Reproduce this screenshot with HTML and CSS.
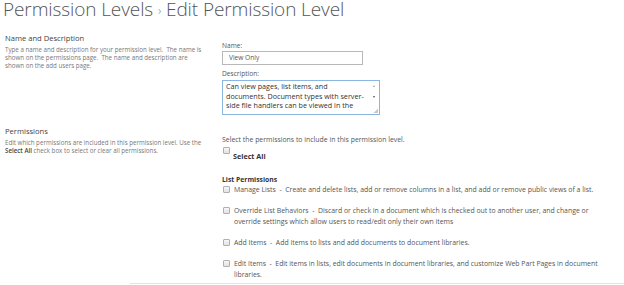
FILE: index.html
```html
<!DOCTYPE html>
<html lang="en">
<head>
<meta charset="utf-8">
<title>Edit Permission Level</title>
<link rel="stylesheet" href="styles.css">
</head>
<body>
<h1 class="title">Permission Levels <span class="sep">›</span> Edit Permission Level</h1>
<div class="section sec-name">
  <div class="left">
    <div class="sec-title">Name and Description</div>
    <div class="sec-desc">Type a name and description for your permission level.&nbsp; The name is shown on the permissions page.&nbsp; The name and description are shown on the add users page.</div>
  </div>
  <div class="right right-name">
    <div class="field-label">Name:</div>
    <div class="input">View Only</div>
    <div class="field-label desc-label">Description:</div>
    <div class="textarea">
      <div class="ta-text">Can view pages, list items, and documents. Document types with server-side file handlers can be viewed in the</div>
      <div class="ta-scroll">
        <span class="arr up"></span>
        <span class="arr down"></span>
        <span class="grip"></span>
      </div>
    </div>
  </div>
</div>
<div class="section sec-perm">
  <div class="left">
    <div class="sec-title">Permissions</div>
    <div class="sec-desc">Edit which permissions are included in this permission level. Use the <b>Select All</b> check box to select or clear all permissions.</div>
  </div>
  <div class="right right-perm">
    <div class="intro">Select the permissions to include in this permission level.</div>
    <div class="select-all">
      <span class="cb"></span>
      <div class="sa-label">Select All</div>
    </div>
    <div class="group-title">List Permissions</div>
    <div class="perm"><span class="cb"></span><div class="perm-text">Manage Lists&nbsp; -&nbsp; Create and delete lists, add or remove columns in a list, and add or remove public views of a list.</div></div>
    <div class="perm"><span class="cb"></span><div class="perm-text">Override List Behaviors&nbsp; -&nbsp; Discard or check in a document which is checked out to another user, and change or override settings which allow users to read/edit only their own items</div></div>
    <div class="perm"><span class="cb"></span><div class="perm-text">Add Items&nbsp; -&nbsp; Add items to lists and add documents to document libraries.</div></div>
    <div class="perm"><span class="cb"></span><div class="perm-text">Edit Items&nbsp; -&nbsp; Edit items in lists, edit documents in document libraries, and customize Web Part Pages in document libraries.</div></div>
  </div>
</div>
<div class="bottom-line"></div>
</body>
</html>
```
FILE: styles.css
```css
html, body {
  margin: 0;
  padding: 0;
  background: #ffffff;
  overflow: hidden;
}
body {
  font-family: "Open Sans", "Liberation Sans", sans-serif;
  color: #444444;
  width: 624px;
  height: 285px;
}
.title {
  margin: 0 0 0 3px;
  font-size: 19px;
  line-height: 19px;
  font-weight: 300;
  color: #555555;
  letter-spacing: -0.1px;
  white-space: nowrap;
}
.title .sep {
  font-size: 13px;
  color: #888;
  vertical-align: 1px;
}
.section {
  display: grid;
  grid-template-columns: 222px 1fr;
}
.sec-name {
  margin-top: 13px;
  height: 93px;
}
.left {
  padding-left: 5px;
}
.sec-title {
  font-size: 7.6px;
  line-height: 10px;
  color: #444;
}
.sec-desc {
  width: 201px;
  margin-top: 3px;
  font-size: 6.2px;
  line-height: 8px;
  color: #777;
}
.sec-desc b {
  color: #444;
  font-weight: 600;
}
.right-name {
  padding-top: 9px;
}
.field-label {
  font-size: 6.6px;
  line-height: 8px;
  color: #555;
}
.input {
  margin-top: 1px;
  width: 133px;
  height: 12px;
  border: 1px solid #b8b8b8;
  padding-left: 6px;
  font-size: 6.6px;
  line-height: 12px;
  color: #555;
}
.desc-label {
  margin-top: 5px;
}
.textarea {
  margin-top: 2px;
  width: 156px;
  height: 33px;
  border: 1px solid #8bb6e0;
  display: flex;
}
.ta-text {
  flex: 1;
  padding: 1px 2px 0 3px;
  font-size: 7.2px;
  line-height: 9.6px;
  color: #333;
  overflow: hidden;
}
.ta-scroll {
  width: 9px;
  position: relative;
  background: #fff;
}
.arr {
  position: absolute;
  left: 3px;
  width: 0;
  height: 0;
  border-left: 1.5px solid transparent;
  border-right: 1.5px solid transparent;
}
.arr.up {
  top: 4px;
  border-bottom: 2px solid #a0a0a0;
}
.arr.down {
  top: 15px;
  border-top: 2px solid #505050;
}
.grip {
  position: absolute;
  right: 1px;
  bottom: 1px;
  width: 4px;
  height: 4px;
  background: linear-gradient(135deg, transparent 50%, #c8c8c8 50%);
}
.right-perm {
  padding-top: 10px;
}
.intro {
  font-size: 6.9px;
  line-height: 8px;
  color: #555;
}
.cb {
  display: block;
  width: 5px;
  height: 5px;
  border: 1px solid #b0b0b0;
  border-radius: 1px;
  background: linear-gradient(#f7f7f7, #e2e2e2);
}
.select-all .cb {
  margin: 3px 0 0 1px;
}
.sa-label {
  margin-left: 11px;
  margin-top: -2px;
  font-size: 7.2px;
  line-height: 9px;
  font-weight: 700;
  color: #333;
}
.group-title {
  margin-top: 14px;
  font-size: 6.8px;
  line-height: 9px;
  font-weight: 700;
  color: #333;
}
.perm {
  display: flex;
  align-items: flex-start;
  margin-bottom: 10px;
}
.perm .cb {
  flex: none;
  margin: 2px 4px 0 1px;
}
.perm-text {
  width: 368px;
  font-size: 6.9px;
  line-height: 11px;
  color: #555;
}
.bottom-line {
  position: absolute;
  left: 130px;
  right: 0;
  top: 283px;
  height: 1px;
  background: #e4e4e4;
}
```
